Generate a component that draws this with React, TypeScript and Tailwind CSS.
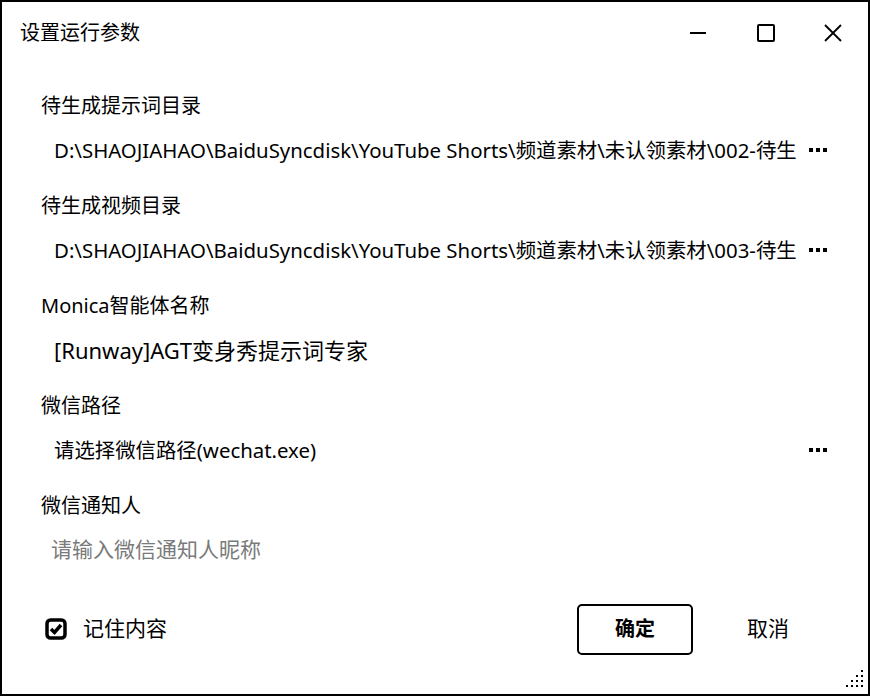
import React from "react";

const FONT = "font-['Noto_Sans','Noto_Sans_CJK_SC',sans-serif]";

function Field({
  label,
  value,
  placeholder,
  browse,
  big,
}: {
  label: string;
  value?: string;
  placeholder?: string;
  browse?: boolean;
  big?: boolean;
}) {
  return (
    <div className="flex h-[100px] flex-col">
      <div className="flex h-[40px] items-center text-[20px] leading-[1.4] text-black">{label}</div>
      <div className="flex h-[48px] items-center">
        {value ? (
          <div
            className={`min-w-0 flex-1 whitespace-nowrap pl-[13px] leading-[1.4] text-black ${
              big ? "text-[22px]" : "text-[20.4px]"
            }`}
          >
            {value}
          </div>
        ) : (
          <div className="min-w-0 flex-1 whitespace-nowrap pl-[10px] text-[21px] leading-[1.4] text-[#7a7a7a]">
            {placeholder}
          </div>
        )}
        {browse && (
          <div className="flex w-[28px] shrink-0 items-center justify-end gap-[3px] pr-[3px]">
            <span className="h-[4px] w-[4px] bg-black" />
            <span className="h-[4px] w-[4px] bg-black" />
            <span className="h-[4px] w-[4px] bg-black" />
          </div>
        )}
      </div>
    </div>
  );
}

export default function App() {
  return (
    <div className={`relative flex h-[696px] w-[870px] flex-col border-2 border-black bg-white ${FONT}`}>
      {/* Title bar */}
      <div className="flex h-[62px] items-center pl-[18px]">
        <div className="flex-1 text-[20px] leading-[1.4] text-black">设置运行参数</div>
        <div className="flex h-full">
          <div className="flex w-[68px] items-center justify-center">
            <span className="h-[2px] w-[16px] bg-black" />
          </div>
          <div className="flex w-[68px] items-center justify-center">
            <span className="h-[18px] w-[18px] rounded-[2px] border-2 border-black" />
          </div>
          <div className="flex w-[68px] items-center justify-center pr-[2px]">
            <svg width="18" height="18" viewBox="0 0 18 18" fill="none" stroke="black" strokeWidth="1.8">
              <path d="M1 1L17 17M17 1L1 17" />
            </svg>
          </div>
        </div>
      </div>

      {/* Fields */}
      <div className="flex flex-col pl-[39px] pr-[38px] pt-[22px]">
        <Field
          label="待生成提示词目录"
          value="D:\SHAOJIAHAO\BaiduSyncdisk\YouTube Shorts\频道素材\未认领素材\002-待生"
          browse
        />
        <Field
          label="待生成视频目录"
          value="D:\SHAOJIAHAO\BaiduSyncdisk\YouTube Shorts\频道素材\未认领素材\003-待生"
          browse
        />
        <Field label="Monica智能体名称" value="[Runway]AGT变身秀提示词专家" big />
        <Field label="微信路径" value="请选择微信路径(wechat.exe)" browse />
        <Field label="微信通知人" placeholder="请输入微信通知人昵称" />
      </div>

      {/* Footer */}
      <div className="flex h-[86px] items-center pl-[43px] pr-[42px]">
        <div className="flex flex-1 items-center gap-[16px]">
          <svg width="22" height="22" viewBox="0 0 22 22" fill="none" stroke="black">
            <rect x="2" y="2" width="18" height="18" rx="3.5" strokeWidth="3.5" />
            <path d="M6 11L9.5 14.5L16 7" strokeWidth="3.5" />
          </svg>
          <span className="text-[21px] leading-[1.4] text-black">记住内容</span>
        </div>
        <div className="flex items-center gap-[17px]">
          <button className="flex h-[51px] w-[116px] items-center justify-center rounded-[5px] border-2 border-black text-[20px] font-bold text-black">
            确定
          </button>
          <button className="flex h-[51px] w-[116px] items-center justify-center text-[21px] text-black">
            取消
          </button>
        </div>
      </div>

      {/* Resize grip */}
      <svg className="absolute bottom-[5px] right-[3px]" width="20" height="20" viewBox="0 0 20 20" fill="black">
        <rect x="16" y="1" width="2" height="2" />
        <rect x="11" y="6" width="2" height="2" />
        <rect x="16" y="6" width="2" height="2" />
        <rect x="6" y="11" width="2" height="2" />
        <rect x="11" y="11" width="2" height="2" />
        <rect x="16" y="11" width="2" height="2" />
        <rect x="1" y="16" width="2" height="2" />
        <rect x="6" y="16" width="2" height="2" />
        <rect x="11" y="16" width="2" height="2" />
        <rect x="16" y="16" width="2" height="2" />
      </svg>
    </div>
  );
}
